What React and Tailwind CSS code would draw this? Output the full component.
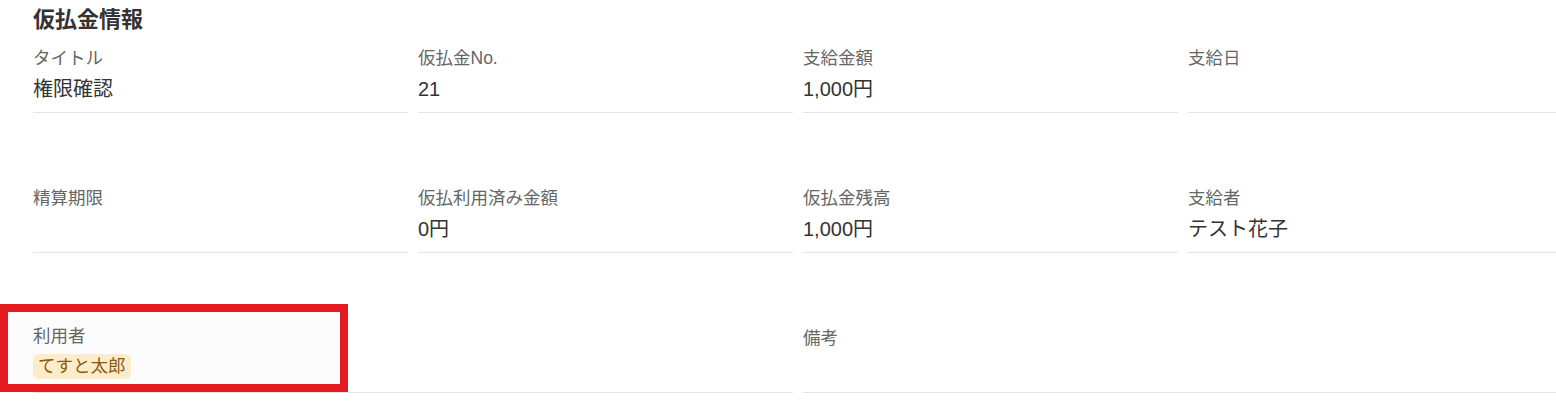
import React from "react";

const fields = [
    [
        { label: "タイトル", value: "権限確認" },
        { label: "仮払金No.", value: "21" },
        { label: "支給金額", value: "1,000円" },
        { label: "支給日", value: "" },
    ],
    [
        { label: "精算期限", value: "" },
        { label: "仮払利用済み金額", value: "0円" },
        { label: "仮払金残高", value: "1,000円" },
        { label: "支給者", value: "テスト花子" },
    ],
];

const Field = ({ label, value, className = "" }) => (
    <div className={`border-b border-[#e0e6e6] pb-[8px] ${className}`}>
        <div className="text-[17.5px] leading-[25px] text-[#666666]">{label}</div>
        <div className="mt-[3px] min-h-[30px] text-[20px] leading-[30px] text-[#333333]">{value}</div>
    </div>
);

const App = () => {
    return (
        <div
            className="min-h-screen w-full overflow-hidden bg-white pl-[33px] pt-[5px]"
            style={{ fontFamily: '"Liberation Sans", "Noto Sans CJK JP", sans-serif' }}
        >
            <h2 className="mb-[11px] text-[22px] font-bold leading-[30px] text-[#333333]">仮払金情報</h2>

            <div className="flex w-[1530px] flex-col">
                {fields.map((row, i) => (
                    <div key={i} className={`grid grid-cols-4 gap-x-[10px] ${i > 0 ? "mt-[73px]" : ""}`}>
                        {row.map((f) => (
                            <Field key={f.label} label={f.label} value={f.value} />
                        ))}
                    </div>
                ))}

                <div className="mt-[71px] grid grid-cols-4 items-end gap-x-[10px]">
                    {/* 利用者 (highlighted) */}
                    <div className="relative col-span-2 border-b border-[#e0e6e6] pb-[13px]">
                        <div className="absolute left-[-25px] top-[-12px] h-[72px] w-[332px] bg-[#fcfcfc]"></div>
                        <div className="relative text-[17.5px] leading-[25px] text-[#666666]">利用者</div>
                        <div className="relative mt-[5px] flex">
                            <span className="rounded-[5px] bg-[#fdecc9] px-[5px] text-[17.5px] leading-[25px] text-[#8a5b10]">
                                てすと太郎
                            </span>
                        </div>
                        <div className="pointer-events-none absolute left-[-33px] top-[-20px] h-[88px] w-[348px] border-[8px] border-[#e41c1f]"></div>
                    </div>
                    <Field label="備考" value="" className="col-span-2" />
                </div>
            </div>
        </div>
    );
};

export default App;
